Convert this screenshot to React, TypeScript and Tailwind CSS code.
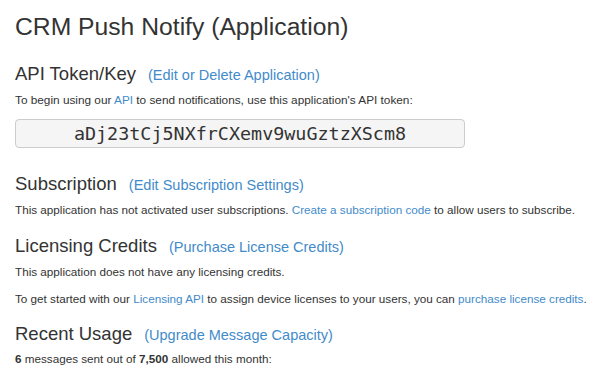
import React from 'react';

function SectionTitle({ title, link, className }: { title: string; link: string; className?: string }) {
  return (
    <h4 className={`flex items-baseline h-[24px] leading-[24px] text-[18.5px] text-[#333] ${className ?? ''}`}>
      <span>{title}</span>
      <a href="#" className="ml-[12px] text-[14.5px] text-[#428bca]">
        ({link})
      </a>
    </h4>
  );
}

function Link({ children }: { children: React.ReactNode }) {
  return (
    <a href="#" className="text-[#428bca]">
      {children}
    </a>
  );
}

export default function App() {
  return (
    <div
      className="w-[605px] h-[377px] overflow-hidden bg-white px-[15px] pt-[12px] text-[#333]"
      style={{ fontFamily: '"Liberation Sans", Arial, sans-serif' }}
    >
      <h1 className="h-[30px] leading-[30px] text-[24.7px] text-[#333]">CRM Push Notify (Application)</h1>

      <SectionTitle className="mt-[20px]" title="API Token/Key" link="Edit or Delete Application" />
      <p className="mt-[6px] h-[16px] leading-[16px] text-[11.8px]">
        To begin using our <Link>API</Link> to send notifications, use this application's API token:
      </p>
      <div className="mt-[11px] flex h-[29px] w-[450px] items-center justify-center rounded-[4px] border border-[#ccc] bg-[#f5f5f5]">
        <span
          className="text-[18.4px] leading-[20px] text-[#333]"
          style={{ fontFamily: '"DejaVu Sans Mono", "Liberation Mono", monospace' }}
        >
          aDj23tCj5NXfrCXemv9wuGztzXScm8
        </span>
      </div>

      <SectionTitle className="mt-[24px]" title="Subscription" link="Edit Subscription Settings" />
      <p className="mt-[6px] h-[16px] leading-[16px] text-[11.7px]">
        This application has not activated user subscriptions. <Link>Create a subscription code</Link> to allow
        users to subscribe.
      </p>

      <SectionTitle className="mt-[16px]" title="Licensing Credits" link="Purchase License Credits" />
      <p className="mt-[6px] h-[16px] leading-[16px] text-[11.7px]">This application does not have any licensing credits.</p>
      <p className="mt-[11px] h-[16px] leading-[16px] text-[11.7px]">
        To get started with our <Link>Licensing API</Link> to assign device licenses to your users, you can{' '}
        <Link>purchase license credits</Link>.
      </p>

      <SectionTitle className="mt-[15px]" title="Recent Usage" link="Upgrade Message Capacity" />
      <p className="mt-[5px] h-[16px] leading-[16px] text-[11.7px]">
        <b>6</b> messages sent out of <b>7,500</b> allowed this month:
      </p>
    </div>
  );
}
